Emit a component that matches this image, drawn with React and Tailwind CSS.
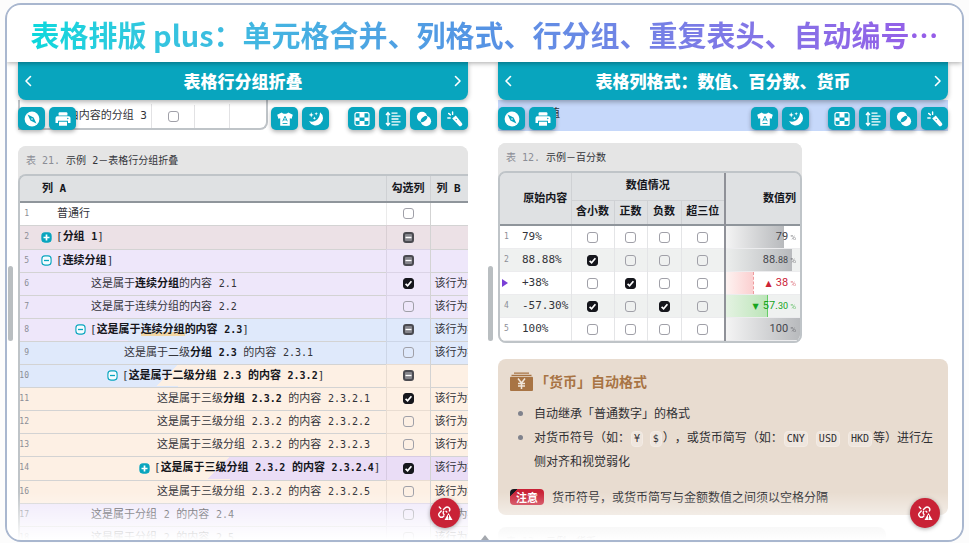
import React from "react";

const mono = "font-['DejaVu_Sans_Mono','Noto_Sans_CJK_SC',monospace]";
const sans = "font-['Noto_Sans_CJK_SC',sans-serif]";

function Check({ state = "off", label }) {
  const ref = React.useRef(null);
  React.useEffect(() => {
    if (ref.current) ref.current.indeterminate = state === "mixed";
  }, [state]);
  return (
    <label className="relative mx-auto block size-[11px]">
      <input
        ref={ref}
        type="checkbox"
        aria-label={label}
        defaultChecked={state === "on"}
        className="block size-[11px] appearance-none rounded-[3px] border border-[#a0a0a8] checked:border-[#15161c] checked:bg-[#15161c] indeterminate:border-2 indeterminate:border-[#4a4a50] indeterminate:bg-[#85858b]"
      />
      <svg viewBox="0 0 11 11" className="pointer-events-none absolute inset-0 size-[11px]" fill="none" stroke="#fff">
        {state === "on" && <path d="M2.6 5.8 4.6 7.8 8.4 3.2" strokeWidth="1.7" />}
        {state === "mixed" && <path d="M2.5 5.5h6" strokeWidth="1.3" />}
      </svg>
    </label>
  );
}

const icons = {
  compass: (
    <>
      <circle cx="8" cy="8" r="7.4" fill="#fff" />
      <path d="M3.6 3.6 9.6 6.4 12.4 12.4 6.4 9.6Z" fill="#08a5be" />
      <circle cx="8" cy="8" r=".8" fill="#fff" />
    </>
  ),
  printer: (
    <>
      <path d="M3.600 4.400V2.200a1 1 0 0 1 1-1h6.800a1 1 0 0 1 1 1v2.200Z" fill="#fff" />
      <path d="M2.200 5.200h11.600a1.700 1.700 0 0 1 1.700 1.700v5.100H13V9.800H3V12H.500V6.900a1.700 1.700 0 0 1 1.700-1.700Z" fill="#fff" />
      <path d="M4 10.700h8v4H4z" fill="#fff" />
      <circle cx="12.800" cy="7.500" r=".7" fill="#08a5be" />
    </>
  ),
  shirt: (
    <>
      <path d="M4.800 1.500c1 1.700 5.400 1.700 6.400 0l4.600 2.300-1.200 4-1.800-.5v7.400H3.200V7.300l-1.800.5L.2 3.800Z" fill="#fff" />
      <path d="M5.700 10.300 8 5.300l2.300 5M6.500 8.900h3M5.600 12.500h4.800" fill="none" stroke="#08a5be" strokeWidth=".900" />
    </>
  ),
  moon: (
    <>
      <path d="M12 1.200a7.300 7.300 0 1 1-11 8.800c5 2.300 11-1.400 11-8.800Z" fill="#fff" />
      <path d="M3.200 1.300 4 3.200l1.900.7L4 4.600l-.8 1.900-.7-1.900L.6 3.900l1.900-.7ZM8.200 1l.5 1.300 1.300.5-1.300.5-.5 1.300-.5-1.300-1.300-.5 1.300-.5ZM6.400 5.600l.5 1.100 1.100.5-1.100.5-.5 1.100-.5-1.100-1.100-.5 1.100-.5Z" fill="#fff" />
    </>
  ),
  board: (
    <>
      <rect x="1" y="1.600" width="14" height="12.800" rx="2" fill="none" stroke="#fff" strokeWidth="1.200" />
      <path d="M5.500 2h5v4.600h-5zM1.200 6.600h4.300V10H1.200zM10.500 6.600h4.300V10h-4.300zM5.500 10h5v4.200h-5z" fill="#fff" />
    </>
  ),
  lines: (
    <path d="M3 2v12M1 4l2-2.400L5 4M1 12l2 2.400L5 12M6.500 2.200h6M6.500 5.100h9M6.500 8h7M6.500 10.900h9M6.500 13.800h7" fill="none" stroke="#fff" strokeWidth="1.300" />
  ),
  rings: (
    <>
      <circle cx="6" cy="5.800" r="5.100" fill="#fff" />
      <circle cx="10" cy="10.200" r="5.100" fill="#fff" />
      <ellipse cx="8" cy="8" rx="4" ry="2" transform="rotate(-42 8 8)" fill="#08a5be" />
    </>
  ),
  torch: (
    <>
      <path d="m5.200 7.600 3.600-3 6 7.400a2 2 0 0 1-.3 2.800 2 2 0 0 1-2.800-.3Z" fill="#fff" />
      <path d="M5.600 1v2.400M1.600 2.400l1.800 1.500M.8 7h2.400" stroke="#fff" strokeWidth="1.400" strokeLinecap="round" />
      <circle cx="9.200" cy="8.600" r=".7" fill="#08a5be" />
    </>
  ),
};

function Tool({ name, label }) {
  return (
    <button type="button" aria-label={label} className="grid h-[23px] w-[27px] place-items-center rounded-[5px] bg-[#08a5be] shadow-[0_2px_4px_rgba(0,0,0,0.3)]">
      <svg viewBox="0 0 16 16" className="size-4">{icons[name]}</svg>
    </button>
  );
}

function Toolbar() {
  return (
    <div className="absolute inset-x-0 top-[45px] flex gap-1">
      <Tool name="compass" label="导航" />
      <Tool name="printer" label="打印" />
      <div className="grow" />
      <Tool name="shirt" label="主题" />
      <Tool name="moon" label="夜间" />
      <div className="w-[11px]" />
      <Tool name="board" label="网格" />
      <Tool name="lines" label="行高" />
      <Tool name="rings" label="混合" />
      <Tool name="torch" label="高亮" />
    </div>
  );
}

function Chevron({ d, label }) {
  return (
    <button type="button" aria-label={label} className="grid size-5 place-items-center">
      <svg viewBox="0 0 12 12" className="size-3" fill="none" stroke="#fff" strokeWidth="1.600" strokeLinecap="round" strokeLinejoin="round">
        <path d={d} />
      </svg>
    </button>
  );
}

function Panel({ title, children }) {
  return (
    <section className="relative min-h-0 min-w-0">
      <div className="absolute top-[204px] -left-2.5 h-[75px] w-[5px] rounded-full bg-[#b9bec1]" />
      <div className="relative z-10 flex h-[38px] items-center justify-between rounded-b-lg bg-[#08a5be] px-px shadow-[0_2px_5px_rgba(0,0,0,0.3)]">
        <Chevron d="M7.500 1.500 3 6l4.500 4.500" label="上一个" />
        <h2 className={`${sans} text-[17px] leading-6 font-black text-white`}>{title}</h2>
        <Chevron d="M4.500 1.500 9 6l-4.500 4.500" label="下一个" />
      </div>
      {children}
      <Toolbar />
      <button type="button" aria-label="断开的链接" className="absolute right-2 bottom-3 z-30 grid size-[30px] place-items-center rounded-full bg-[#c92236] shadow-[0_1px_4px_rgba(0,0,0,0.35)]">
        <svg viewBox="0 0 16 16" className="size-4" fill="none" stroke="#fff" strokeWidth="1.400" strokeLinecap="round">
          <path d="M6.500 4.500 8.300 2.700a2.600 2.600 0 0 1 3.700 0 2.600 2.600 0 0 1 .4 3.200M7 9.400a2.500 2.500 0 0 1-.4-3.100M4.300 6.100 2.600 7.700a2.600 2.600 0 0 0 3.700 3.700l.5-.5M2.300 2l1.400 1.400M9 6.200l.8.800" />
          <path d="m11.500 8 4 7h-8Z" fill="#fff" stroke="none" />
          <path d="M11.500 10.500v1.800M11.500 13.800v.1" stroke="#c92236" strokeWidth="1" />
        </svg>
      </button>
    </section>
  );
}

const V = "bg-[#eee7fa]";
const B = "bg-[#dfe9fb]";
const C = "bg-[#fdf0e4]";

function Text({ children }) {
  return children.split(/([0-9.]+)/).map((s, i) => (i % 2 ? <span key={i} className="text-[10px]">{s}</span> : s));
}
function Bold({ children }) {
  return <b className="font-bold text-[#15161c]"><Text>{children}</Text></b>;
}

const rows = [
  { n: 1, pad: "pl-[37px]", bg: "bg-white", text: "普通行", c: "off" },
  { n: 2, pad: "pl-[21px]", bg: "bg-[#ece1e6]", g: "plus", text: <Bold>分组 1</Bold>, c: "mixed" },
  { n: 5, pad: "pl-[21px]", bg: V, g: "minus", text: <Bold>连续分组</Bold>, c: "mixed" },
  { n: 6, pad: "pl-[71px]", bg: V, text: <>这是属于<Bold>连续分组</Bold><Text>的内容 2.1</Text></>, c: "on", r: true },
  { n: 7, pad: "pl-[71px]", bg: V, text: <Text>这是属于连续分组的内容 2.2</Text>, c: "off", r: true },
  { n: 8, pad: "pl-[55px]", bg: "bg-[linear-gradient(135deg,#eee7fa_77px,#dfe9fb_77px)]", g: "minus", text: <><Bold>这是属于</Bold><span className="shadow-[inset_0_-4px_#f3d7a5]"><Bold>连续分组</Bold></span><Bold>的内容 2.3</Bold></>, c: "mixed", r: true },
  { n: 9, pad: "pl-[104px]", bg: B, text: <>这是属于二级<Bold>分组 2.3</Bold><Text> 的内容 2.3.1</Text></>, c: "off", r: true },
  { n: 10, pad: "pl-[87px]", bg: "bg-[linear-gradient(135deg,#dfe9fb_112px,#fdf0e4_112px)]", g: "minus", text: <Bold>这是属于二级分组 2.3 的内容 2.3.2</Bold>, c: "mixed" },
  { n: 11, pad: "pl-[137px]", bg: C, text: <>这是属于三级<Bold>分组 2.3.2</Bold><Text> 的内容 2.3.2.1</Text></>, c: "on", r: true },
  { n: 12, pad: "pl-[137px]", bg: C, text: <Text>这是属于三级分组 2.3.2 的内容 2.3.2.2</Text>, c: "off", r: true },
  { n: 13, pad: "pl-[137px]", bg: C, text: <Text>这是属于三级分组 2.3.2 的内容 2.3.2.3</Text>, c: "off", r: true },
  { n: 14, pad: "pl-[119px]", bg: "bg-[linear-gradient(135deg,#fdf0e4_149px,#eaddf6_149px)]", g: "plus", text: <Bold>这是属于三级分组 2.3.2 的内容 2.3.2.4</Bold>, c: "on", r: true },
  { n: 16, pad: "pl-[137px]", bg: C, text: <Text>这是属于三级分组 2.3.2 的内容 2.3.2.5</Text>, c: "off", r: true },
  { n: 17, pad: "pl-[71px]", bg: V, text: <Text>这是属于分组 2 的内容 2.4</Text>, c: "off", r: true },
  { n: 18, pad: "pl-[71px]", bg: V, text: <Text>这是属于分组 2 的内容 2.5</Text>, c: "off", r: true },
];

function Toggle({ kind }) {
  return (
    <button type="button" aria-label={kind === "plus" ? "展开" : "折叠"} className="mr-1 size-[11px] shrink-0">
      <svg viewBox="0 0 11 11" className="size-[11px]" fill="none">
        <rect x=".900" y=".900" width="9.200" height="9.200" rx="3" stroke="#08a5be" strokeWidth="1.100" fill={kind === "plus" ? "#08a5be" : "#f4fcff"} />
        {kind === "plus" ? <path d="M5.500 2.500v6M2.500 5.500h6" stroke="#fff" strokeWidth="1.700" /> : <path d="M3 5.500h5" stroke="#08a5be" strokeWidth="1.300" />}
      </svg>
    </button>
  );
}

function Caption({ no, children }) {
  return (
    <div className={`${mono} flex h-7 items-center gap-1.5 rounded-t-lg bg-[#e5e5e5] px-2 text-[10px] text-[#33343a]`}>
      <span className="text-[#8b8d96]">表 {no}.</span>
      <span>{children}</span>
    </div>
  );
}

function GroupTable() {
  return (
    <div className="overflow-hidden">
      <div className="flex h-[30px] w-[250px] items-end rounded-br-lg border-r-2 border-b-2 border-l-2 border-[#bfc4c8]">
        <div className={`${mono} flex h-6 w-full items-center text-[11px] text-[#33343a]`}>
          <span className="w-[132px] shrink-0 border-r border-[#e2e2e4] pr-1 text-right leading-6 whitespace-nowrap">自由内容的分组 3</span>
          <span className="w-[43px] shrink-0 border-r border-[#e2e2e4] py-1.5"><Check label="分组 3" /></span>
          <span className="h-6 w-[35px] border-r border-[#e2e2e4]" />
        </div>
      </div>
      <div className="mt-4 overflow-hidden rounded-t-lg bg-[#e5e5e5]">
        <Caption no="21">示例 2－表格行分组折叠</Caption>
        <div className="-mr-1.5 overflow-hidden rounded-tl-lg border-t-2 border-l-2 border-[#bfc4c8]">
          <table className={`${mono} w-full table-fixed border-collapse text-[11px] leading-4 text-[#33343a]`}>
            <colgroup>
              <col />
              <col className="w-[44px]" />
              <col className="w-[44px]" />
            </colgroup>
            <thead>
              <tr className="h-[26px] border-b-2 border-[#8f959b] bg-[#dfe1e3] font-bold text-[#15161c]">
                <th className="pl-[22px] text-left">列 A</th>
                <th className="border-x border-[#cfd1d4]">勾选列</th>
                <th className="pl-1.5 text-left">列 B</th>
              </tr>
            </thead>
            <tbody>
              {rows.map((r) => (
                <tr key={r.n} className={`${r.bg} ${r.g === "plus" ? "h-6" : "h-[23px]"} border-b border-black/8`}>
                  <td className="relative overflow-hidden p-0 whitespace-nowrap">
                    <span className="absolute left-0 w-[9px] text-right text-[8px] text-[#8b8d96]"><span className="float-right">{r.n}</span></span>
                    <div className={`${r.pad} flex items-center`}>
                      {r.g && <Toggle kind={r.g} />}
                      <span>{r.g ? <>[{r.text}]</> : r.text}</span>
                    </div>
                  </td>
                  <td className="border-x border-black/8 p-0"><Check state={r.c} label={`第 ${r.n} 行`} /></td>
                  <td className="overflow-hidden p-0 pl-1 whitespace-nowrap">{r.r ? "该行为被" : ""}</td>
                </tr>
              ))}
            </tbody>
          </table>
        </div>
      </div>
    </div>
  );
}

const nums = [
  { n: 1, t: "79%", c: [0, 0, 0, 0], bar: "w-[79%] bg-linear-to-r from-[#f4f4f4] to-[#b8babd]", col: "text-[#44454b]", v: "79" },
  { n: 2, t: "88.88%", c: [1, 0, 0, 0], bar: "w-[89%] bg-linear-to-r from-[#eceeed] to-[#b8babd]", col: "text-[#44454b]", v: "88.", d: "88" },
  { n: 3, t: "+38%", c: [0, 1, 0, 0], bar: "w-[38%] border-r border-dashed border-[#ee9a9d] bg-linear-to-r from-[#fdf3f1] to-[#fbcfd0]", col: "text-[#cc2437]", v: "38", a: "▲" },
  { n: 4, t: "-57.30%", c: [1, 0, 1, 0], bar: "w-[57%] border-r border-[#66cc66] bg-linear-to-r from-[#e4f2e2] to-[#bce5b9]", col: "text-[#16a51e]", v: "57.", d: "30", a: "▼" },
  { n: 5, t: "100%", c: [0, 0, 0, 0], bar: "w-full bg-linear-to-r from-[#f4f4f4] to-[#b8babd]", col: "text-[#44454b]", v: "100" },
];

function PercentTable() {
  const line = "border-[#cfd1d4]";
  return (
    <div className="w-[304px] rounded-lg bg-[#e5e5e5]">
      <Caption no="12">示例－百分数</Caption>
      <div className="overflow-hidden rounded-lg border-2 border-[#bfc4c8]">
        <table className={`${mono} w-full table-fixed border-collapse text-[11px] leading-4 text-[#33343a]`}>
          <colgroup>
            <col className="w-[71px]" />
            <col className="w-[43px]" />
            <col className="w-[33px]" />
            <col className="w-[34px]" />
            <col className="w-[44px]" />
            <col />
          </colgroup>
          <thead className="bg-[#dfe1e3] text-[#15161c]">
            <tr className="h-[27px]">
              <th rowSpan={2} className="p-0 pl-5 text-center">原始内容</th>
              <th colSpan={4} className={`border-b border-l ${line}`}>数值情况</th>
              <th rowSpan={2} className="border-l-2 border-[#8f9198] p-0 pr-1 text-right">数值列</th>
            </tr>
            <tr className="h-[25px] whitespace-nowrap">
              {["含小数", "正数", "负数", "超三位"].map((h) => <th key={h} className={`border-l p-0 ${line}`}>{h}</th>)}
            </tr>
          </thead>
          <tbody className="border-t-2 border-[#8f959b]">
            {nums.map((r) => (
              <tr key={r.n} className="h-[23px] border-b border-[#ececee] odd:bg-white even:bg-[#eff1f0]">
                <td className="p-0 whitespace-nowrap">
                  <div className="flex items-center">
                    <span className="w-[22px] pl-1 text-[8px] text-[#8b8d96]">
                      {r.n === 3 ? <svg viewBox="0 0 6 8" className="-ml-0.5 h-2 w-1.5"><path d="M0 0 6 4 0 8Z" fill="#7a3fd6" /></svg> : r.n}
                    </span>
                    <span>{r.t}</span>
                  </div>
                </td>
                {r.c.map((x, i) => <td key={i} className="border-l border-[#e4e5e7] p-0"><Check state={x ? "on" : "off"} label={`${r.t} ${i + 1}`} /></td>)}
                <td className="border-l-2 border-[#8f9198] p-0">
                  <div className={`relative flex h-[22px] items-center justify-end pr-1 ${r.col}`}>
                    <div className={`absolute inset-y-0 left-0 ${r.bar}`} />
                    <span className="relative flex items-baseline font-[Roboto,sans-serif] text-[11px] whitespace-nowrap">
                      {r.a && <span className="mr-1 font-['DejaVu_Sans',sans-serif] text-[8px]">{r.a}</span>}
                      {r.v}{r.d && <small className="text-[9px]">{r.d}</small>}
                      <small className="ml-0.5 text-[8px] opacity-60">%</small>
                    </span>
                  </div>
                </td>
              </tr>
            ))}
          </tbody>
        </table>
      </div>
    </div>
  );
}

function Code({ children }) {
  return <code className={`${mono} mx-px inline-block rounded-[4px] border border-[#f3ebe4] bg-[#efe6de] px-0.5 text-[10px] leading-[14px]`}>{children}</code>;
}

function Note() {
  return (
    <div className={`${sans} mt-4 h-[156px] rounded-lg bg-[#e8dcd0] px-3 pt-2.5 text-[12px] leading-6 text-[#2f2f33]`}>
      <h3 className="flex items-center gap-1 text-[14px] font-bold text-[#a87444] [text-spacing-trim:space-all]">
        <svg viewBox="0 0 23 19" className="h-[19px] w-[23px]">
          <path d="M4 .500h15v1.200H4zM1.500 2.700h20v1.200h-20z" fill="#a87444" />
          <rect y="4.800" width="23" height="14.200" rx="1" fill="#a87444" />
          <path d="m8 6.500 3.500 4.500L15 6.500M11.500 11v6M8 11.500h7M8 14h7" fill="none" stroke="#f1e6da" strokeWidth="1.500" />
        </svg>
        <span className="-ml-0.5">「货币」自动格式</span>
      </h3>
      <ul className="mt-2 list-disc pl-6 [text-spacing-trim:space-all] marker:text-[#7f828c]">
        <li>自动继承「普通数字」的格式</li>
        <li>
          对货币符号（如：<Code>¥</Code> <span className="ml-0.5"><Code>$</Code></span>），或货币简写（如：<Code>CNY</Code>
          <span className="mx-1.5"><Code>USD</Code></span><Code>HKD</Code>等）进行左侧对齐和视觉弱化
        </li>
      </ul>
      <p className="mt-3 flex items-center gap-2">
        <strong className="rounded-[4px] bg-[linear-gradient(135deg,#15161c_5px,#c92236_5px)] px-1.5 text-[11px] leading-4 text-white">注意</strong>
        货币符号，或货币简写与金额数值之间须以空格分隔
      </p>
    </div>
  );
}

export default function App() {
  return (
    <main className="h-screen overflow-hidden bg-[#fcfcfc] px-[5px] pt-[3px] pb-px">
      <div className="relative flex h-full flex-col overflow-hidden rounded-2xl border-2 border-[#a9b7cf] bg-white">
        <header className="relative z-20 flex h-[57px] shrink-0 items-center justify-center bg-white shadow-[0_1px_5px_rgba(0,0,0,0.35)]">
          <h1 className={`${sans} bg-linear-to-r from-[#08d8dc] via-[#5593e4] to-[#965ce8] bg-clip-text text-[29px] leading-10 font-bold whitespace-nowrap text-transparent`}>
            表格排版 plus：单元格合并、列格式、行分组、重复表头、自动编号…
          </h1>
        </header>
        <div className="grid min-h-0 flex-1 grid-cols-2 grid-rows-[minmax(0,1fr)] gap-[30px] pr-3.5 pl-[11px]">
          <Panel title="表格行分组折叠">
            <GroupTable />
          </Panel>
          <Panel title="表格列格式：数值、百分数、货币">
            <div className={`${mono} h-[31px] bg-[#c6d8fa] pt-1 pl-10 text-[11px] leading-5 text-[#33343a]`}>数值</div>
            <div className="mt-3">
              <PercentTable />
            </div>
            <Note />
            <div className="mt-3 w-[388px]">
              <Caption no="13">示例－货币</Caption>
            </div>
          </Panel>
        </div>
        <div className="pointer-events-none absolute inset-x-0 bottom-0 z-20 h-12 bg-linear-to-b from-white/0 to-white" />
        <svg viewBox="0 0 8 5" className="absolute bottom-0 left-1/2 z-20 h-[5px] w-2 -translate-x-1/2"><path d="m4 0 4 5H0Z" fill="#a4a8ae" /></svg>
      </div>
    </main>
  );
}
